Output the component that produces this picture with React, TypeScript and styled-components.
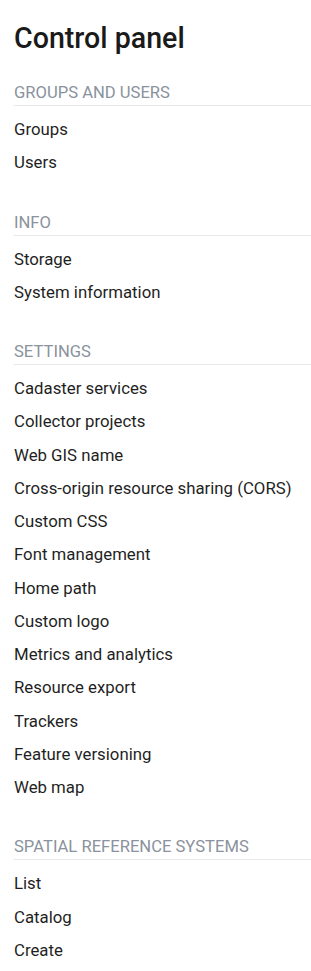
import { createGlobalStyle } from 'styled-components'
import styled from 'styled-components'

const GlobalStyle = createGlobalStyle`
  html, body {
    margin: 0;
    padding: 0;
    background: #ffffff;
  }
  body {
    font-family: Roboto, "Liberation Sans", sans-serif;
    -webkit-font-smoothing: antialiased;
  }
`

const sections: { title: string; items: string[] }[] = [
  { title: 'Groups and users', items: ['Groups', 'Users'] },
  { title: 'Info', items: ['Storage', 'System information'] },
  {
    title: 'Settings',
    items: [
      'Cadaster services',
      'Collector projects',
      'Web GIS name',
      'Cross-origin resource sharing (CORS)',
      'Custom CSS',
      'Font management',
      'Home path',
      'Custom logo',
      'Metrics and analytics',
      'Resource export',
      'Trackers',
      'Feature versioning',
      'Web map',
    ],
  },
  { title: 'Spatial reference systems', items: ['List', 'Catalog', 'Create'] },
]

const Page = styled.div`
  padding: 20px 0 0 14px;
  box-sizing: border-box;
  width: 311px;
`

const Title = styled.h1`
  margin: 0 0 26px 0;
  font-size: 28.6px;
  line-height: 36px;
  font-weight: 500;
  color: #1a1a1a;
`

const Section = styled.section`
  & + & {
    margin-top: 32px;
  }
`

const SectionHeading = styled.h2`
  margin: 0 0 7px 0;
  padding-bottom: 1px;
  font-size: 16.6px;
  line-height: 22px;
  font-weight: 400;
  text-transform: uppercase;
  color: #8a929d;
  border-bottom: 1px solid #e8e8e8;
`

const ItemList = styled.ul`
  list-style: none;
  margin: 0;
  padding: 0;
`

const Item = styled.li`
  font-size: 16.8px;
  line-height: 33.25px;
  color: #1f1f1f;
  white-space: nowrap;
`

export default function App() {
  return (
    <Page>
      <GlobalStyle />
      <Title>Control panel</Title>
      {sections.map(s => (
        <Section key={s.title}>
          <SectionHeading>{s.title}</SectionHeading>
          <ItemList>
            {s.items.map(i => (
              <Item key={i}>{i}</Item>
            ))}
          </ItemList>
        </Section>
      ))}
    </Page>
  )
}
